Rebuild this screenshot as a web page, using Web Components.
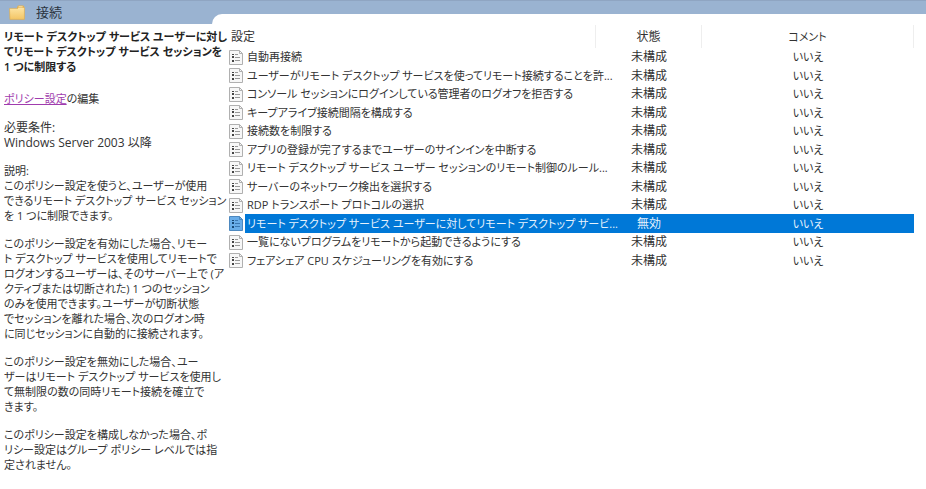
<!DOCTYPE html>
<html lang="ja">
<head>
<meta charset="utf-8">
<meta name="viewport" content="width=device-width, initial-scale=1">
<title>接続</title>
<style>
  body {
    margin: 0;
    background: #fff;
    color: #333;
    font-family: "Open Sans", "Noto Sans CJK JP", sans-serif;
    font-size: 11px;
    line-height: 15px;
    font-feature-settings: "palt";
  }
  .required { font-size: 12px; }
</style>
</head>
<body>

<policy-console>
  <title-bar slot="title">接続</title-bar>

  <policy-details slot="details">
    <span slot="name">リモート デスクトップ サービス ユーザーに対し<br>てリモート デスクトップ サービス セッションを<br>1 つに制限する</span>
    <policy-edit-link slot="edit" href="#edit" label="ポリシー設定">の編集</policy-edit-link>
    <p class="required">必要条件:<br>Windows Server 2003 以降</p>
    <p>説明:<br>このポリシー設定を使うと、ユーザーが使用<br>できるリモート デスクトップ サービス セッション<br>を 1 つに制限できます。</p>
    <p>このポリシー設定を有効にした場合、リモー<br>ト デスクトップ サービスを使用してリモートで<br>ログオンするユーザーは、そのサーバー上で (ア<br>クティブまたは切断された) 1 つのセッション<br>のみを使用できます。ユーザーが切断状態<br>でセッションを離れた場合、次のログオン時<br>に同じセッションに自動的に接続されます。</p>
    <p>このポリシー設定を無効にした場合、ユー<br>ザーはリモート デスクトップ サービスを使用し<br>て無制限の数の同時リモート接続を確立で<br>きます。</p>
    <p>このポリシー設定を構成しなかった場合、ポ<br>リシー設定はグループ ポリシー レベルでは指<br>定されません。</p>
  </policy-details>

  <policy-table slot="list"></policy-table>
</policy-console>

<script type="module">
/* Page frame: title strip, details on the left, list on the right */
class PolicyConsole extends HTMLElement {
  constructor() {
    super();
    const root = this.attachShadow({ mode: 'open' });
    root.innerHTML = `
      <style>
        :host { display: block; }
        .cols { display: grid; grid-template-columns: 212px minmax(0, 1fr); align-items: start; }
        /* the list panel rises into the title strip with a rounded corner */
        main {
          margin-top: -10px;
          padding: 11px 12px 0 14px;
          background: #fff;
          border-top-left-radius: 10px;
        }
        aside { position: relative; }
      </style>
      <slot name="title"></slot>
      <div class="cols">
        <aside><slot name="details"></slot></aside>
        <main><slot name="list"></slot></main>
      </div>
    `;
  }
}
customElements.define('policy-console', PolicyConsole);

class TitleBar extends HTMLElement {
  constructor() {
    super();
    const root = this.attachShadow({ mode: 'open' });
    root.innerHTML = `
      <style>
        :host {
          display: flex; align-items: center; gap: 11px;
          height: 24px; padding-left: 9px; box-sizing: border-box;
          background: #9ab3d1; border-top: 1px solid #8fa5c2;
          color: #2b3440; font-size: 13px;
        }
        svg { width: 16px; height: 16px; flex: none; }
      </style>
      <svg viewBox="0 0 16 16" aria-hidden="true">
        <defs>
          <linearGradient id="f" x1="0" y1="0" x2="0" y2="1">
            <stop offset="0" stop-color="#fde5a4"/><stop offset="1" stop-color="#f3c565"/>
          </linearGradient>
        </defs>
        <path d="M8 2.2 9 .6h5.4l.8 1.400V13H8z" fill="#e3b04f"/>
        <path d="M9.600 1.400h4v1.400h-4z" fill="#fff3cf"/>
        <path d="M.5 3.400h8.200l1-1H15.400v12H.9z" fill="url(#f)" stroke="#dba94c" stroke-width=".6"/>
      </svg>
      <slot></slot>
    `;
  }
}
customElements.define('title-bar', TitleBar);

class PolicyDetails extends HTMLElement {
  constructor() {
    super();
    const root = this.attachShadow({ mode: 'open' });
    root.innerHTML = `
      <style>
        :host {
          display: flex; flex-direction: column; gap: 14px;
          padding: 5px 0 8px 4px; white-space: nowrap;
        }
        h2 { margin: 0 0 3px; font-size: inherit; font-weight: 600; color: #222; }
        .text { display: flex; flex-direction: column; gap: 13px; }
        ::slotted(p) { margin: 0; }
      </style>
      <h2><slot name="name"></slot></h2>
      <slot name="edit"></slot>
      <div class="text"><slot></slot></div>
    `;
  }
}
customElements.define('policy-details', PolicyDetails);

class PolicyEditLink extends HTMLElement {
  constructor() {
    super();
    const root = this.attachShadow({ mode: 'open' });
    root.innerHTML = `
      <style>
        :host { display: block; }
        a { color: #a03cae; text-decoration: underline; }
      </style>
      <a></a><slot></slot>
    `;
    const a = root.querySelector('a');
    a.href = this.getAttribute('href');
    a.textContent = this.getAttribute('label');
  }
}
customElements.define('policy-edit-link', PolicyEditLink);

/* Sheet icon with three bulleted lines */
class PolicyIcon extends HTMLElement {
  constructor() {
    super();
    const root = this.attachShadow({ mode: 'open' });
    root.innerHTML = `
      <style>
        :host { display: block; --sheet: #f7f7f7; --edge: #b0b0b0; --line: #999; --dot: #444; }
        :host([selected]) { --sheet: #69ade9; --edge: #4d88bf; --line: #3c78b4; --dot: #174775; }
        svg { display: block; width: 14px; height: 15px; }
      </style>
      <svg viewBox="0 0 14 15" aria-hidden="true">
        <path d="M.5.5h10l3 3v11H.5z" fill="var(--sheet)" stroke="var(--edge)"/>
        <path d="M10.500.5v3h3" fill="none" stroke="var(--edge)"/>
        <path d="M3 4h2v1H3zM3 6h2v2H3zM3 10h2v2H3z" fill="var(--dot)"/>
        <path d="M6 4.500h3M6 7.500h5M6 10.500h5" stroke="var(--line)"/>
      </svg>
    `;
  }
}
customElements.define('policy-icon', PolicyIcon);

const policies = [
  ['自動再接続', '未構成'],
  ['ユーザーがリモート デスクトップ サービスを使ってリモート接続することを許...', '未構成'],
  ['コンソール セッションにログインしている管理者のログオフを拒否する', '未構成'],
  ['キープアライブ接続間隔を構成する', '未構成'],
  ['接続数を制限する', '未構成'],
  ['アプリの登録が完了するまでユーザーのサインインを中断する', '未構成'],
  ['リモート デスクトップ サービス ユーザー セッションのリモート制御のルール...', '未構成'],
  ['サーバーのネットワーク検出を選択する', '未構成'],
  ['RDP トランスポート プロトコルの選択', '未構成'],
  ['リモート デスクトップ サービス ユーザーに対してリモート デスクトップ サービ...', '無効'],
  ['一覧にないプログラムをリモートから起動できるようにする', '未構成'],
  ['フェアシェア CPU スケジューリングを有効にする', '未構成'],
];
const selected = 9;

class PolicyTable extends HTMLElement {
  constructor() {
    super();
    const root = this.attachShadow({ mode: 'open' });
    const rows = policies.map(([name, state], i) => `
      <tr${i === selected ? ' class="on" aria-selected="true"' : ''}>
        <td class="icon"><policy-icon${i === selected ? ' selected' : ''}></policy-icon></td>
        <td class="name">${name}</td>
        <td class="state">${state}</td>
        <td>いいえ</td>
      </tr>`).join('');
    root.innerHTML = `
      <style>
        :host { display: block; }
        table { width: 100%; table-layout: fixed; border-collapse: separate; border-spacing: 0; }
        .c-icon { width: 19px; }
        .c-state { width: 106px; }
        .c-comment { width: 212px; }
        th, td { padding: 0; text-align: center; white-space: nowrap; line-height: 18px; }
        th { height: 23px; font-weight: 400; border-right: 1px solid #eee; }
        .first { padding-left: 5px; text-align: left; }
        .first, .state { font-size: 12px; }
        td { height: 18px; }
        tr:nth-child(even) td { height: 19px; }
        .icon { padding-left: 3px; }
        .name { padding-left: 2px; text-align: left; }
        .on td:not(.icon) { background: #0078d7; color: #e6f2fc; }
      </style>
      <table>
        <colgroup><col class="c-icon"><col><col class="c-state"><col class="c-comment"></colgroup>
        <thead><tr><th class="first" colspan="2">設定</th><th class="state">状態</th><th>コメント</th></tr></thead>
        <tbody>${rows}</tbody>
      </table>
    `;
  }
}
customElements.define('policy-table', PolicyTable);
</script>
</body>
</html>
